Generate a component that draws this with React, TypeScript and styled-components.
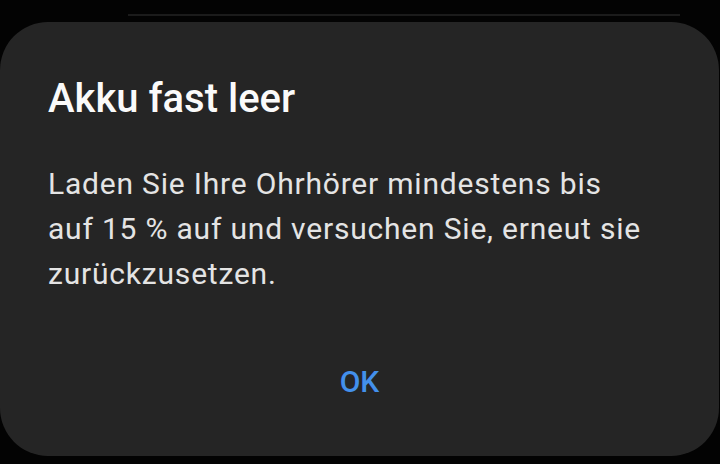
import React from "react";
import styled, { createGlobalStyle } from "styled-components";

const GlobalStyle = createGlobalStyle`
  html, body {
    margin: 0;
    padding: 0;
    background: #000;
  }
  body {
    font-family: Roboto, "Noto Sans", "Liberation Sans", sans-serif;
    -webkit-font-smoothing: antialiased;
  }
`;

const Screen = styled.div`
  width: 720px;
  height: 464px;
  display: flex;
  flex-direction: column;
  overflow: hidden;
  background: #030303;
`;

const StatusLine = styled.div`
  margin: 14px 0 0 128px;
  width: 552px;
  height: 2px;
  background: #1b1b1b;
`;

const Dialog = styled.section`
  margin-top: 6px;
  width: 719px;
  height: 434px;
  box-sizing: border-box;
  padding: 54px 40px 0 48px;
  background: #252525;
  border-radius: 48px;
  display: flex;
  flex-direction: column;
`;

const Title = styled.h2`
  margin: 0;
  font-size: 40px;
  line-height: 46px;
  font-weight: 500;
  color: #fafafa;
`;

const Message = styled.p`
  margin: 39px 0 0 0;
  font-size: 30px;
  line-height: 45px;
  font-weight: 400;
  letter-spacing: 0.8px;
  color: #e4e4e4;
  white-space: nowrap;
`;

const Actions = styled.div`
  margin-top: 66px;
  padding-right: 8px;
  display: flex;
  justify-content: center;
`;

const DialogButton = styled.button<{ $color?: string }>`
  border: 0;
  padding: 0 12px;
  background: transparent;
  font-family: inherit;
  font-size: 30px;
  line-height: 40px;
  font-weight: 500;
  color: ${(p) => p.$color || "#4390ec"};
  cursor: pointer;
`;

export default function App() {
  return (
    <>
      <GlobalStyle />
      <Screen>
        <StatusLine />
        <Dialog>
          <Title>Akku fast leer</Title>
          <Message>
            Laden Sie Ihre Ohrhörer mindestens bis
            <br />
            auf 15 % auf und versuchen Sie, erneut sie
            <br />
            zurückzusetzen.
          </Message>
          <Actions>
            <DialogButton>OK</DialogButton>
          </Actions>
        </Dialog>
      </Screen>
    </>
  );
}
